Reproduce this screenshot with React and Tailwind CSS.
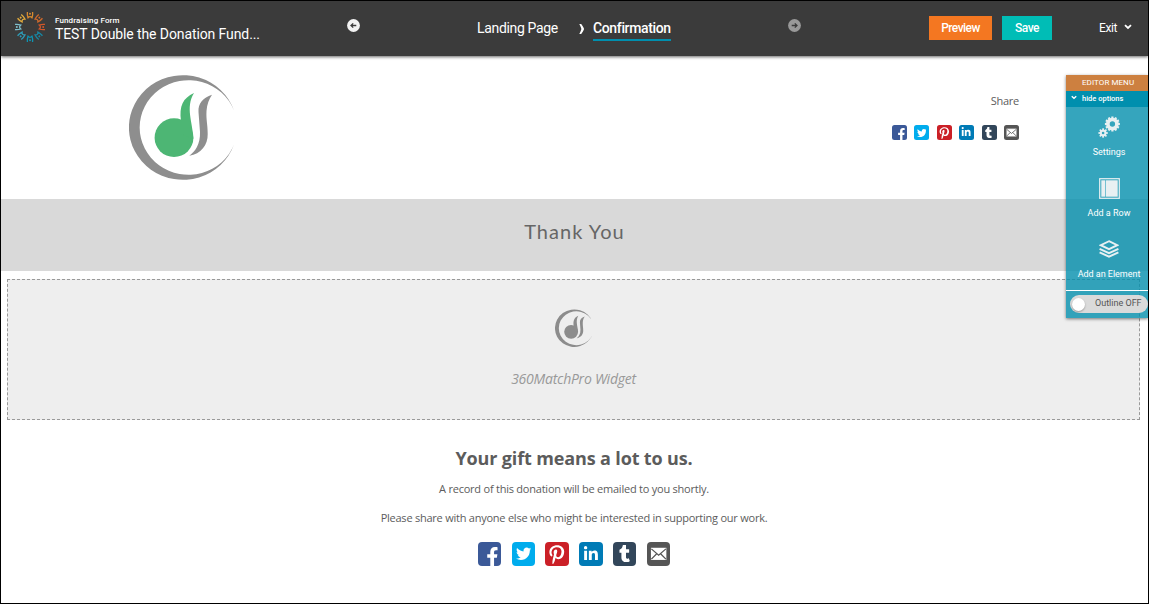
import { FaFacebookF, FaTwitter, FaPinterestP, FaLinkedinIn, FaTumblr } from 'react-icons/fa';

const SUN_RAYS = [
  { angle: 0, color: '#d98a2f' },
  { angle: 45, color: '#cf6a2c' },
  { angle: 90, color: '#d2572a' },
  { angle: 135, color: '#1787a3' },
  { angle: 180, color: '#0f93b1' },
  { angle: 225, color: '#2f9db8' },
  { angle: 270, color: '#7fc0cd' },
  { angle: 315, color: '#e3ab3c' },
];

function BrandMark() {
  return (
    <svg viewBox="-16 -16 32 32" className="w-8 h-8">
      {SUN_RAYS.map((ray) => (
        <g key={ray.angle} transform={`rotate(${ray.angle})`}>
          <path d="M-2.6 -15 Q-3 -12 -2 -9.2 Q0 -11.6 2 -9.2 Q3 -12 2.6 -15" fill="none" stroke={ray.color} strokeWidth="1.3" />
          <circle cx="0" cy="-13.2" r="1" fill={ray.color} />
        </g>
      ))}
    </svg>
  );
}

function DoubleLogo({ className, note, line }) {
  return (
    <svg viewBox="0 0 106 106" className={className}>
      <path fill={line} d="M105 36.5 A54 52.3 0 1 0 105 70.5 A48.8 47.3 0 1 1 105 36.5 Z" />
      <circle cx="45" cy="63.7" r="19.4" fill={note} />
      <path fill={note} d="M52 47 C50 32 54 24 65 19 C56 34 64 48 64.3 65 L52 60 Z" />
      <path fill={line} d="M83 20.7 C74 24 69 29 69.5 38 L71 58 C71.5 70 66 78 60.3 81.7 C72 80 79 71 78.7 60 C78.7 50 77 46 77.5 37 C78 30 80 25 83 20.7 Z" />
    </svg>
  );
}

function Envelope() {
  return (
    <svg viewBox="0 0 24 24" className="w-full h-full" fill="none" stroke="#fff" strokeWidth="1.5">
      <rect x="4.8" y="6.6" width="14.4" height="11" fill="#fff" />
      <path d="M4.5 7 L12 13.5 L19.5 7 M4.5 17.5 L10 12 M19.5 17.5 L14 12" stroke="#555" strokeWidth="1.3" />
    </svg>
  );
}

function SocialIcons({ small }) {
  const tile = small
    ? 'w-[15px] h-[15px] rounded-[2.5px] overflow-hidden text-white flex'
    : 'w-[23.3px] h-[23.5px] rounded-[4px] overflow-hidden text-white flex';
  return (
    <div className={small ? 'flex gap-[7.5px]' : 'flex gap-[10.5px]'}>
      <div className={`${tile} bg-[#3b5998] items-end justify-end`}>
        <FaFacebookF className="w-[72%] h-[82%] -mb-[3%]" />
      </div>
      <div className={`${tile} bg-[#00aced] items-center justify-center`}>
        <FaTwitter className="w-[66%] h-[66%]" />
      </div>
      <div className={`${tile} bg-[#cb2027] items-center justify-center`}>
        <FaPinterestP className="w-[84%] h-[84%] mt-[6%]" />
      </div>
      <div className={`${tile} bg-[#007bb6] items-center justify-center`}>
        <FaLinkedinIn className="w-[68%] h-[68%]" />
      </div>
      <div className={`${tile} bg-[#32465a] items-center justify-center`}>
        <FaTumblr className="w-[74%] h-[74%]" />
      </div>
      <div className={`${tile} bg-[#555555] items-center justify-center`}>
        <Envelope />
      </div>
    </div>
  );
}

function ArrowDot({ flip, color }) {
  return (
    <svg viewBox="0 0 13 13" className={flip ? 'w-[13px] h-[13px] rotate-180' : 'w-[13px] h-[13px]'}>
      <circle cx="6.5" cy="6.5" r="6.4" fill={color} />
      <path d="M9.3 6.5 H4.5 M6.2 4.4 L4 6.5 L6.2 8.6" stroke="#3b3b3b" strokeWidth="1.3" fill="none" />
    </svg>
  );
}

function Chevron({ className }) {
  return (
    <svg viewBox="0 0 8 6" className={className} fill="none" stroke="currentColor" strokeWidth="1.8">
      <path d="M1 1.2 L4 4 L7 1.2" />
    </svg>
  );
}

function Header() {
  return (
    <header className="relative z-10 h-[55px] shrink-0 bg-[#3b3b3b] text-white flex font-[Roboto,sans-serif] shadow-[0_1px_3px_rgba(0,0,0,0.6)] whitespace-nowrap">
      <div className="w-[346px] flex pl-[13px]">
        <div className="pt-[10px]">
          <BrandMark />
        </div>
        <div className="pl-[9px] pt-[14px]">
          <div className="text-[8px] leading-[11px] font-medium tracking-[0.13px]">Fundraising Form</div>
          <div className="text-[14px] leading-[17px] tracking-[-0.1px]">TEST Double the Donation Fund...</div>
        </div>
      </div>
      <div className="w-[130px] pt-[18px]">
        <ArrowDot color="#f2f2f2" />
      </div>
      <nav className="w-[311px] flex pt-[17px] text-[14px] leading-5">
        <span className="w-[102px] tracking-[-0.33px]">Landing Page</span>
        <svg viewBox="0 0 5 10" className="w-[5px] h-[10px] mt-[6px] mr-[9px]">
          <path d="M0.3 0 H2.2 Q5 4 5 5 Q5 6 2.2 10 H0.3 Q2.3 6 2.3 5 Q2.3 4 0.3 0 Z" fill="#fff" />
        </svg>
        <span className="h-[23px] w-[78px] border-b-2 border-[#008fae] font-medium tracking-[-0.36px]">Confirmation</span>
      </nav>
      <div className="w-[141px] pt-[18px]">
        <ArrowDot flip color="#999999" />
      </div>
      <div className="flex pt-[15px] text-[12px] leading-6">
        <button className="w-[63px] h-6 bg-[#f47721] font-medium tracking-[-0.55px]">Preview</button>
        <button className="w-[50px] h-6 ml-[10px] bg-[#00bdb6] font-medium tracking-[-0.5px]">Save</button>
        <span className="ml-[47px] tracking-[-0.4px]">Exit</span>
        <Chevron className="w-2 h-[6px] mt-[8px] ml-[7px]" />
      </div>
    </header>
  );
}

function Gear({ cx, cy, r, hole, tooth, count }) {
  return (
    <g transform={`translate(${cx} ${cy})`}>
      <circle r={(r + hole) / 2} fill="none" stroke="#e8f0f2" strokeWidth={r - hole} />
      {Array.from({ length: count }, (_, i) => (
        <rect key={i} x={-tooth / 2} y={-r - 1.2} width={tooth} height="2.2" fill="#e8f0f2" transform={`rotate(${(360 / count) * i})`} />
      ))}
    </g>
  );
}

function EditorMenu() {
  return (
    <aside className="absolute z-20 right-0 top-[74px] w-[82px] h-[243px] flex flex-col text-white font-[Roboto,sans-serif] whitespace-nowrap shadow-[0_1px_3px_rgba(0,0,0,0.5)]">
      <div className="h-4 bg-[#cd8040] text-[8px] leading-[15px] pl-4 tracking-[0.07px]">EDITOR MENU</div>
      <div className="h-4 bg-[#008fae] flex text-[7.5px] leading-[15px] font-medium">
        <Chevron className="w-[6px] h-[5px] mt-[4px] ml-[5px] mr-[5px]" />
        hide options
      </div>
      <div className="flex-1 bg-[#038eac]/80 flex flex-col items-center text-[9px] leading-3 pl-[4px]">
        <svg viewBox="0 0 22 22" className="w-[22px] h-[22px] mt-[9px]">
          <Gear cx={14.4} cy={8} r={6.3} hole={2.7} tooth={2.2} count={12} />
          <Gear cx={5.1} cy={17} r={3.5} hole={1.3} tooth={1.7} count={8} />
        </svg>
        <div className="mt-[8px] tracking-[-0.05px]">Settings</div>
        <svg viewBox="0 0 21 21" className="w-[21px] h-[21px] mt-[20px]">
          <rect x="0.7" y="0.7" width="19.6" height="19.6" fill="none" stroke="#e8f0f2" strokeWidth="1.2" />
          <rect x="2.3" y="2.3" width="3.9" height="16.4" fill="#e8f0f2" />
          <rect x="6.8" y="2.3" width="11.9" height="16.4" fill="#e8f0f2" />
        </svg>
        <div className="mt-[8px]">Add a Row</div>
        <svg viewBox="0 0 20 18" className="w-5 h-[18px] mt-[21px]" fill="none" stroke="#e8f0f2" strokeWidth="1.9">
          <path d="M10 1.2 L18.2 5.2 L10 9.2 L1.8 5.2 Z" />
          <path d="M0.6 8.8 L10 13.1 L19.4 8.8 M0.6 12.4 L10 16.7 L19.4 12.4" />
        </svg>
        <div className="mt-[10px] tracking-[-0.03px]">Add an Element</div>
      </div>
      <div className="h-px bg-white" />
      <div className="h-[27px] bg-[#038eac]/80 pt-[4px] pl-[4px]">
        <div className="h-[18px] rounded-full bg-[#dadada] flex items-center pl-[2px] text-[#555555] text-[9px]">
          <span className="w-[13px] h-[13px] rounded-full bg-white shadow-[0_1px_2px_rgba(0,0,0,0.3)]" />
          <span className="ml-[10px] leading-3 -mt-0.5">Outline OFF</span>
        </div>
      </div>
    </aside>
  );
}

export default function App() {
  return (
    <div className="relative w-[1149px] h-[604px] border border-black bg-white overflow-hidden flex flex-col font-['Open_Sans',sans-serif] text-[#5c5c5c]">
      <Header />

      <section className="h-[143px] flex justify-between pl-[128px] pr-[129px] shrink-0">
        <DoubleLogo className="w-[106px] h-[106px] mt-[18px]" note="#4db674" line="#8e8e8e" />
        <div className="pt-[37px] flex flex-col items-end">
          <div className="text-[11px] leading-4 mb-[16px] tracking-[-0.25px]">Share</div>
          <SocialIcons small />
        </div>
      </section>

      <section className="h-[72px] shrink-0 bg-[#d9d9d9] text-center pt-[18px]">
        <h1 className="font-[Lato,sans-serif] text-[20px] leading-7 tracking-[1.05px] text-[#666666]">Thank You</h1>
      </section>

      <section className="mt-[8px] ml-[6px] w-[1133px] h-[141px] shrink-0 border border-dashed border-[#999999] bg-[#eeeeee] flex flex-col items-center">
        <DoubleLogo className="w-[38px] h-[38px] mt-[29px]" note="#8c8c8c" line="#8c8c8c" />
        <p className="text-[14px] italic leading-5 mt-[22px] tracking-[-0.25px] text-[#999999]">360MatchPro Widget</p>
      </section>

      <section className="flex flex-col items-center text-[11px] leading-4 pr-px">
        <h2 className="text-[18px] font-bold leading-6 mt-[26px] tracking-[-0.14px]">Your gift means a lot to us.</h2>
        <p className="mt-[11px] tracking-[-0.23px]">A record of this donation will be emailed to you shortly.</p>
        <p className="mt-[13px] mb-[16px] tracking-[-0.235px]">Please share with anyone else who might be interested in supporting our work.</p>
        <SocialIcons />
      </section>

      <EditorMenu />
    </div>
  );
}
